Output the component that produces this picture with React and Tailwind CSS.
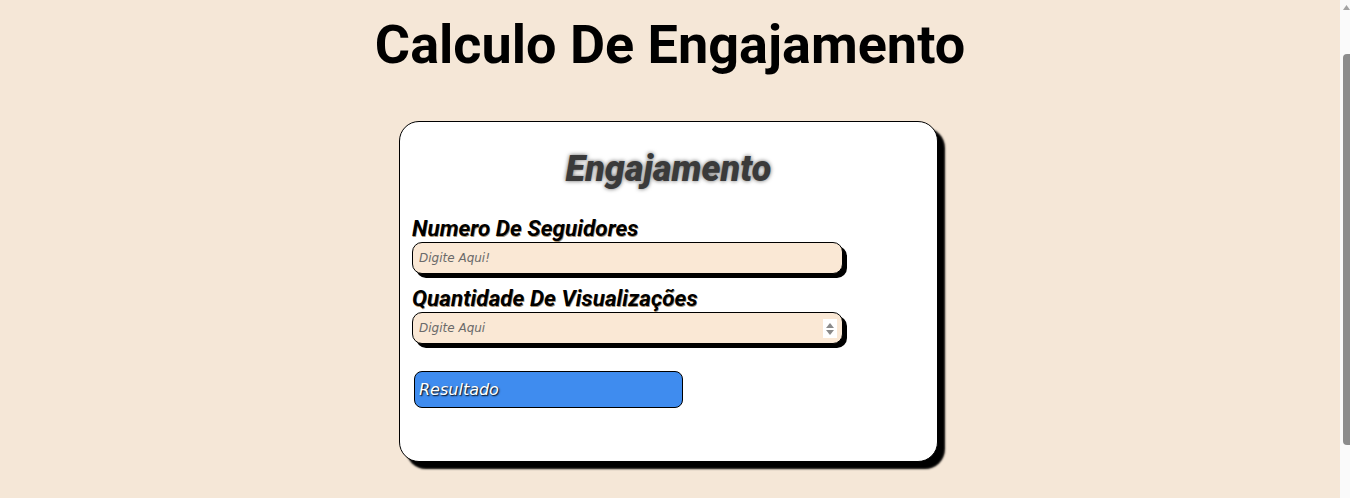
const inputCls =
  "h-[32px] w-[431px] rounded-[10px] border border-black bg-[#fae8d5] px-[6px] font-['DejaVu_Sans',sans-serif] text-[12px] italic text-[#555] shadow-[4px_4px_0_#000] outline-none placeholder:text-[#6a6a6a]";

const labelCls =
  "text-[22.5px] font-bold italic leading-[26px] text-black [text-shadow:0.6px_0.6px_0.6px_rgba(110,70,20,0.6)]";

export default function App() {
  return (
    <div className="flex h-[498px] overflow-hidden bg-[#f5e7d7] font-['Roboto',sans-serif]">
      <main className="flex-1">
        <h1 className="pt-[12px] text-center text-[54px] font-bold leading-[66px] text-black">
          Calculo De Engajamento
        </h1>
        <div className="mt-[43px] flex justify-center">
          <div className="mr-[3px] h-[341px] w-[539px] rounded-[20px] border border-black bg-white px-[12px] pt-[25px] shadow-[7px_7px_2px_#000]">
            <h2 className="text-center text-[36px] font-black italic leading-[44px] text-[#3a3a3a] [text-shadow:0_0_4px_rgba(0,0,0,0.6)]">
              Engajamento
            </h2>
            <form className="mt-[24px] flex flex-col">
              <label className={labelCls}>Numero De Seguidores</label>
              <input type="text" placeholder="Digite Aqui!" className={`mt-[1px] ${inputCls}`} />
              <label className={`mt-[11px] ${labelCls}`}>Quantidade De Visualizações</label>
              <div className="relative mt-[1px] w-[431px]">
                <input type="number" placeholder="Digite Aqui" className={inputCls} />
                <span className="pointer-events-none absolute right-[6px] top-[7px] flex h-[19px] w-[14px] flex-col items-center justify-center gap-[2px] bg-white">
                  <svg width="8" height="5" viewBox="0 0 8 5">
                    <path d="M4 0L8 5H0z" fill="#8a8a8a" />
                  </svg>
                  <svg width="8" height="5" viewBox="0 0 8 5">
                    <path d="M0 0h8L4 5z" fill="#8a8a8a" />
                  </svg>
                </span>
              </div>
              <button
                type="button"
                className="ml-[2px] mt-[27px] h-[37px] w-[269px] rounded-[8px] border border-black bg-[#3f8cef] px-[4px] text-left font-['DejaVu_Sans',sans-serif] text-[16px] italic text-white [text-shadow:1px_1px_1.5px_#000]"
              >
                Resultado
              </button>
            </form>
          </div>
        </div>
      </main>
      <aside className="flex w-[10px] flex-col bg-[#fafafa]">
        <div className="flex h-[15px] items-center justify-end">
          <svg width="7" height="5" viewBox="0 0 7 5">
            <path d="M3.5 0L7 5H0z" fill="#a3a3a3" />
          </svg>
        </div>
        <div className="ml-[3px] mt-[39px] h-[391px] rounded-l-[4px] bg-[#8c8c8c]" />
      </aside>
    </div>
  );
}
